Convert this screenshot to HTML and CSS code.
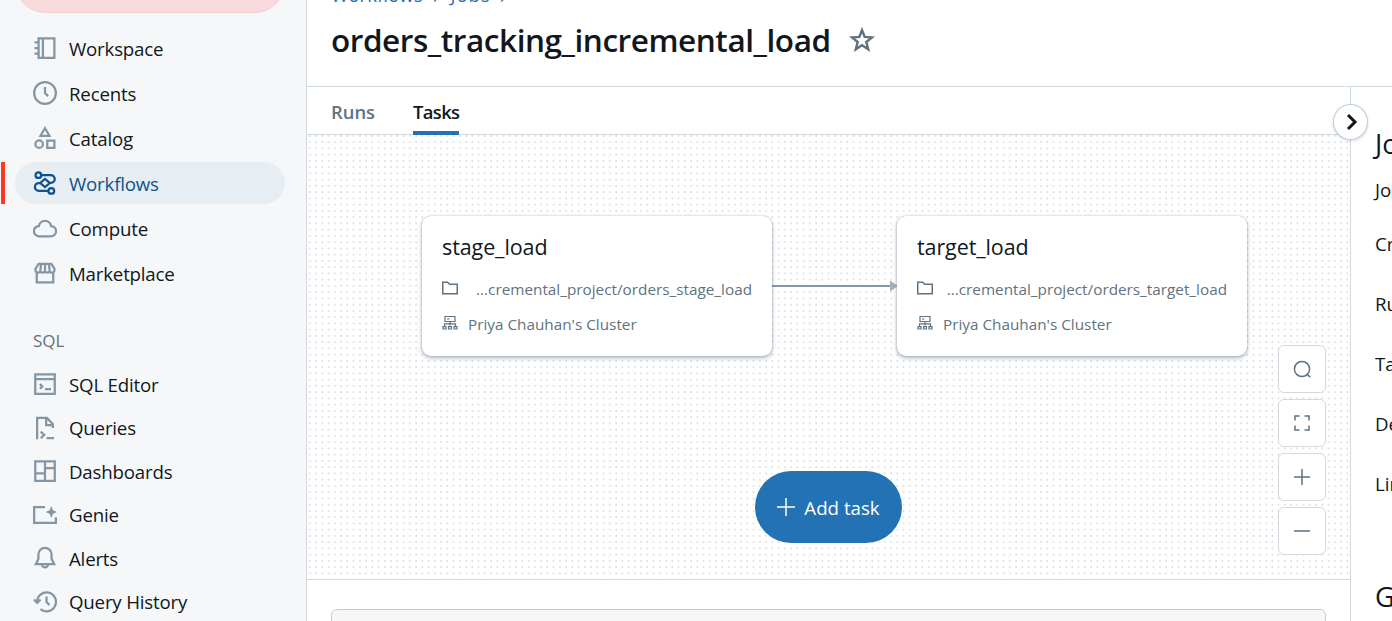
FILE: index.html
```html
<!DOCTYPE html>
<html lang="en">
<head>
<meta charset="utf-8">
<title>orders_tracking_incremental_load</title>
<link rel="stylesheet" href="styles.css">
</head>
<body>
<div class="app">
  <aside class="sidebar">
    <div class="new-button"></div>
    <nav class="nav nav-main">
      <a class="nav-item"><svg class="icon" viewBox="0 0 16 16"><path d="M3.75 1.5h10.5v13H3.75zM6.6 1.5v13M1 4.25h2.5M1 8h2.5M1 11.75h2.5"/></svg><span>Workspace</span></a>
      <a class="nav-item"><svg class="icon" viewBox="0 0 16 16"><circle cx="8" cy="8" r="7.25"/><path d="M8 4v4l2.1 2.1"/></svg><span>Recents</span></a>
      <a class="nav-item"><svg class="icon" viewBox="0 0 16 16"><path d="M8 1.5l3 5H5zM9.5 9.75h4.75v4.75H9.5z"/><circle cx="4.1" cy="12.1" r="2.5"/></svg><span>Catalog</span></a>
      <a class="nav-item active"><svg class="icon" viewBox="0 0 16 16"><circle cx="3.6" cy="2.75" r="1.9"/><circle cx="12.2" cy="13.25" r="1.9"/><path d="M5.5 2.75h6.4a2.6 2.6 0 0 1 0 5.2H11M5 8H3.9a2.6 2.6 0 0 0 0 5.25h6.4M8 5.3L11.2 8 8 10.7 4.8 8z"/></svg><span>Workflows</span></a>
      <a class="nav-item"><svg class="icon" viewBox="0 0 16 16"><path d="M3.9 6.7a4.15 4.15 0 0 1 8.2 0 3.4 3.4 0 0 1-.3 6.8H4a3.4 3.4 0 0 1-.1-6.8z"/></svg><span>Compute</span></a>
      <a class="nav-item"><svg class="icon" viewBox="0 0 16 16"><path d="M2.5 8v6.25h11V8M3.8 1.9h8.4L14.3 5v.8a1.6 1.6 0 0 1-3.15.6 1.6 1.6 0 0 1-3.15 0 1.6 1.6 0 0 1-3.15 0A1.6 1.6 0 0 1 1.7 5.8V5zM4.9 6.2L5.4 2M8 6.2V2M11.1 6.2L10.6 2"/></svg><span>Marketplace</span></a>
    </nav>
    <div class="nav-heading">SQL</div>
    <nav class="nav nav-sql">
      <a class="nav-item"><svg class="icon" viewBox="0 0 16 16"><path d="M1.5 1.5h13v13h-13zM1.5 4.75h13M8 11.4h4M4.6 8l1.6 1.6-1.6 1.6"/></svg><span>SQL Editor</span></a>
      <a class="nav-item"><svg class="icon" viewBox="0 0 16 16"><path d="M2.75 15.5V1.25h6.5L13.25 5.4V8M8.75 1.25V6h4.5M5.2 10.4l2.3 2.2-2.3 2.2M9 14.75h5"/></svg><span>Queries</span></a>
      <a class="nav-item"><svg class="icon" viewBox="0 0 16 16"><path d="M1.5 1.5h13v13h-13zM8 1.5v13M1.5 9.5H8M8 6h6.5"/></svg><span>Dashboards</span></a>
      <a class="nav-item"><svg class="icon" viewBox="0 0 16 16"><path d="M8 2.75H.75v10.5h14.5V9.5"/><path class="solid" d="M12.2 2l1.1 2.9 2.7 1.1-2.7 1.1-1.1 2.9-1.1-2.9L8.4 6l2.7-1.1z"/></svg><span>Genie</span></a>
      <a class="nav-item"><svg class="icon" viewBox="0 0 16 16"><path d="M8 1.2a4.4 4.4 0 0 0-4.4 4.4v3L1.9 12h12.2l-1.7-3.4v-3A4.4 4.4 0 0 0 8 1.2zM6 12.3a2 2 0 1 0 4 0"/></svg><span>Alerts</span></a>
      <a class="nav-item"><svg class="icon" viewBox="0 0 16 16"><path d="M2.7 8A6.3 6.3 0 1 1 5 12.8M.6 6.3L2.8 8.6 5 6.3M9 4.4V8l2 2"/></svg><span>Query History</span></a>
    </nav>
  </aside>

  <div class="main">
    <header class="header">
      <div class="crumbs"><span>Workflows</span><svg class="sep" viewBox="0 0 16 16"><path d="M5.5 3l5 5-5 5"/></svg><span class="crumb-jobs">Jobs</span><svg class="sep" viewBox="0 0 16 16"><path d="M5.5 3l5 5-5 5"/></svg></div>
      <div class="title-row">
        <h1 class="title">orders_tracking_incremental_load</h1>
        <svg class="star" viewBox="0 0 16 16"><path d="M8 1.9l1.65 4.2 4.5.3-3.5 2.85 1.15 4.4L8 11.2l-3.8 2.45 1.15-4.4L1.85 6.4l4.5-.3z"/></svg>
      </div>
    </header>
    <div class="body">
      <section class="job">
        <div class="tabs"><a class="tab">Runs</a><a class="tab selected">Tasks</a></div>
        <div class="canvas">
          <svg class="dots" width="1043" height="444"><defs><pattern id="dot" width="6.25" height="6.25" patternUnits="userSpaceOnUse"><circle cx="2.9" cy="0.85" r="0.85"/></pattern></defs><rect width="1043" height="444" fill="url(#dot)"/></svg>
          <svg class="edge" width="126" height="12" viewBox="0 0 126 12"><path class="edge-line" d="M0 6h119"/><path class="edge-head" d="M118 .5l8 5.5-8 5.5z"/></svg>
          <article class="node node-stage">
            <h2 class="node-title">stage_load</h2>
            <div class="node-row path"><svg class="mini" viewBox="0 0 16 16"><path d="M.75 2.25h4.9l2 2h7.6v9.5H.75z"/></svg><span>...cremental_project/orders_stage_load</span></div>
            <div class="node-row"><svg class="mini cluster" viewBox="0 0 16 16"><path d="M3 1.5h10v5H3zM5 4h2.5M8 6.5v4M2.5 11V8.8h11V11M1 11.6h3V14H1zM6.5 11.6h3V14h-3zM12 11.6h3V14h-3z"/></svg><span>Priya Chauhan's Cluster</span></div>
          </article>
          <article class="node node-target">
            <h2 class="node-title">target_load</h2>
            <div class="node-row path"><svg class="mini" viewBox="0 0 16 16"><path d="M.75 2.25h4.9l2 2h7.6v9.5H.75z"/></svg><span>...cremental_project/orders_target_load</span></div>
            <div class="node-row"><svg class="mini cluster" viewBox="0 0 16 16"><path d="M3 1.5h10v5H3zM5 4h2.5M8 6.5v4M2.5 11V8.8h11V11M1 11.6h3V14H1zM6.5 11.6h3V14h-3zM12 11.6h3V14h-3z"/></svg><span>Priya Chauhan's Cluster</span></div>
          </article>
          <button class="add-task"><svg viewBox="0 0 18 18"><path d="M9 0v18M0 9h18"/></svg><span>Add task</span></button>
          <div class="tools">
            <button class="tool"><svg viewBox="0 0 18 18"><circle cx="9" cy="9" r="7.6"/><path d="M13.6 13.6l3.6 3.6"/></svg></button>
            <button class="tool"><svg viewBox="0 0 18 18"><path d="M2 6.5V2.1h4.5M11.5 2.1H16v4.4M16 11.5v4.4h-4.5M6.5 15.9H2v-4.4"/></svg></button>
            <button class="tool"><svg viewBox="0 0 18 18"><path d="M9 1v16M1 9h16"/></svg></button>
            <button class="tool"><svg viewBox="0 0 18 18"><path d="M1 9h16"/></svg></button>
          </div>
        </div>
        <div class="detail"><div class="detail-box"></div></div>
      </section>
      <aside class="panel">
        <button class="toggle"><svg viewBox="0 0 18 18"><path d="M6 2l7 7-7 7"/></svg></button>
        <h3 class="panel-title">Job details</h3>
        <div class="field field-first">Job ID</div>
        <div class="field">Creator</div>
        <div class="field">Run as</div>
        <div class="field">Tags</div>
        <div class="field">Description</div>
        <div class="field">Lineage</div>
        <h3 class="panel-title second">Git</h3>
      </aside>
    </div>
  </div>
</div>
</body>
</html>
```
FILE: styles.css
```css
* { box-sizing: border-box; }
body { margin: 0; font-family: "Open Sans", "Noto Sans", sans-serif; font-size: 18.7px; color: #11171c; background: #fff; }
h1, h2, h3 { margin: 0; font-weight: 400; }
button { padding: 0; margin: 0; font: inherit; }
svg { display: block; flex: none; fill: none; stroke: currentColor; stroke-width: 1.5; }
span, h1, h2 { white-space: nowrap; }
.app { display: flex; width: 1392px; height: 621px; overflow: hidden; }

.sidebar { width: 307px; flex: none; background: #f6f7f9; border-right: 1px solid #d1d9e1; }
.new-button { width: 270px; height: 60px; margin: -47px 0 0 15px; background: #f8dadc; border: 1px solid #f7cfd1; border-radius: 30px; }
.nav { display: flex; flex-direction: column; }
.nav-main { gap: 3px; margin-top: 14px; }
.nav-sql { gap: 1.5px; }
.nav-item { position: relative; display: flex; align-items: center; gap: 12px; height: 42px; margin: 0 21px 0 15px; padding-left: 18px; border-radius: 21px; letter-spacing: -.2px; }
.nav-item .icon { width: 24px; height: 24px; color: #8396a5; }
.nav-item.active { background: #e6edf3; color: #0e538b; }
.nav-item.active .icon { color: #0e538b; }
.nav-item.active::before { content: ""; position: absolute; left: -14px; top: 0; width: 4px; height: 42px; background: #ff3621; }
.icon .solid { fill: currentColor; stroke: none; }
.nav-heading { height: 69px; padding: 35px 0 0 33px; font-size: 17px; line-height: 24px; color: #5f7281; }

.main { flex: 1; min-width: 0; display: flex; flex-direction: column; }
.header { height: 87px; border-bottom: 1px solid #d1d9e1; padding-left: 24px; }
.crumbs { display: flex; align-items: center; height: 28px; margin-top: -20px; color: #2272b4; }
.sep { width: 28px; height: 18px; margin-top: 4px; color: #5f7281; stroke-width: 1.2; }
.crumb-jobs { letter-spacing: .8px; }
.title-row { display: flex; align-items: center; gap: 18px; height: 63px; }
.title { font-size: 31.5px; font-weight: 600; line-height: 44px; letter-spacing: -.44px; padding-top: 1px; }
.star { width: 26px; height: 26px; color: #5f7281; }
.body { flex: 1; min-height: 0; display: flex; }
.job { width: 1043px; flex: none; display: flex; flex-direction: column; }
.tabs { display: flex; gap: 38px; height: 48px; padding-left: 24px; border-bottom: 1px solid #d1d9e1; font-size: 18.4px; font-weight: 600; color: #5f7281; }
.tab { position: relative; height: 48px; line-height: 49px; }
.tab.selected { color: #11171c; letter-spacing: -.65px; }
.tab.selected::after { content: ""; position: absolute; left: 0; right: 0; bottom: 0; height: 4.5px; background: #2272b4; }

.canvas { position: relative; height: 445px; border-bottom: 1px solid #d1d9e1; }
.dots { stroke: none; }
.dots circle { fill: #d2d2dc; }
.edge { position: absolute; left: 465px; top: 144.5px; stroke-width: 2; }
.edge-line { stroke: #8497a8; }
.edge-head { fill: #a9afb9; stroke: none; }
.node { position: absolute; top: 81px; width: 350px; height: 140px; padding: 15px 20px 0; background: #fff; border-radius: 9px; box-shadow: 0 2px 4px rgba(60, 85, 110, .42), 0 0 2px rgba(60, 85, 110, .32); }
.node-stage { left: 115px; }
.node-target { left: 590px; }
.node-title { font-size: 21.5px; line-height: 32px; letter-spacing: -.1px; }
.node-row { display: flex; align-items: center; gap: 10px; height: 35px; font-size: 15.3px; color: #5f7281; }
.node-title + .node-row { margin-top: 8px; }
.node-row.path { justify-content: space-between; }
.mini { width: 16px; height: 16px; margin-top: -2px; }
.mini.cluster { stroke-width: 1.2; }
.add-task { position: absolute; left: 448px; top: 336px; width: 147px; height: 72px; display: flex; align-items: center; justify-content: center; gap: 9px; border: 0; border-radius: 36px; background: #2272b4; color: #fff; }
.add-task svg { width: 18px; height: 18px; }
.tools { position: absolute; right: 24px; top: 210px; display: flex; flex-direction: column; gap: 6px; }
.tool { width: 48px; height: 48px; display: flex; align-items: center; justify-content: center; background: #fff; border: 1px solid #d1d9e1; border-radius: 6px; color: #5f7281; }
.tool svg { width: 18px; height: 18px; }
.detail { flex: 1; padding: 29px 24px 0; }
.detail-box { height: 60px; background: #f6f7f9; border: 1px solid #c0cdd8; border-radius: 6px; }

.panel { position: relative; flex: 1; min-width: 0; padding: 35px 0 0 24px; border-left: 1px solid #d1d9e1; white-space: nowrap; }
.toggle { position: absolute; left: -18px; top: 17px; width: 35px; height: 36px; display: flex; align-items: center; justify-content: center; background: #fff; border: 1px solid #c0cdd8; border-radius: 50%; box-shadow: 0 1px 3px rgba(60, 85, 110, .2); color: #11171c; }
.toggle svg { width: 18px; height: 18px; stroke-width: 3; }
.panel-title { font-size: 27px; line-height: 44px; }
.field { height: 60px; line-height: 30px; }
.field-first { height: 54px; margin-top: 9px; }
.panel-title.second { margin-top: 46px; }
```
